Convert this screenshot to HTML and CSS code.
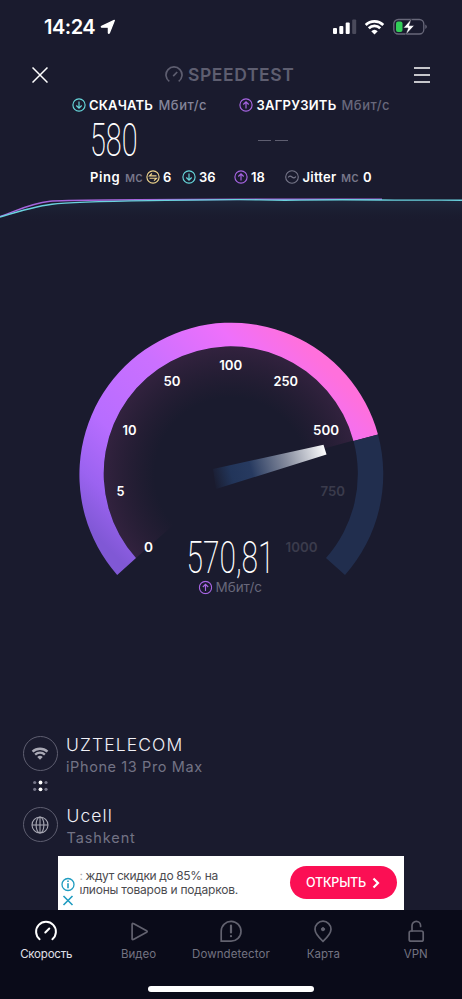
FILE: index.html
```html
<!DOCTYPE html>
<html lang="ru">
<head>
<meta charset="utf-8">
<title>Speedtest</title>
<link rel="stylesheet" href="styles.css">
</head>
<body>
<svg class="defs" width="0" height="0">
  <symbol id="down" viewBox="0 0 14 14"><g fill="none" stroke="currentColor" stroke-width="1.15"><circle cx="7" cy="7" r="6.1"/><path d="M7 3.5v6.6M4.3 7.5 7 10.2l2.7-2.7"/></g></symbol>
  <symbol id="up" viewBox="0 0 14 14"><g fill="none" stroke="currentColor" stroke-width="1.15"><circle cx="7" cy="7" r="6.1"/><path d="M7 10.5V3.9M4.3 6.5 7 3.8l2.7 2.7"/></g></symbol>
  <symbol id="swap" viewBox="0 0 14 14"><g fill="none" stroke="currentColor" stroke-width="1.15"><circle cx="7" cy="7" r="6.1"/><path d="M10.5 5.9h-7L6 3.5M3.5 8.2h7L8 10.6"/></g></symbol>
  <symbol id="wave" viewBox="0 0 14 14"><g fill="none" stroke="currentColor" stroke-width="1.1"><circle cx="7" cy="7" r="6.3"/><path d="M3.2 7.6C4.2 5.7 5.6 5.7 7 7s2.800 1.300 3.800-.6"/></g></symbol>
  <symbol id="wifi" viewBox="0 0 22 16"><path d="M1.800 5.800a13.400 13.400 0 0 1 18.400 0M5 9.300a8.700 8.700 0 0 1 12 0" fill="none" stroke="currentColor" stroke-width="2.900"/><path d="M11 15.800 7.600 12.400a5 5 0 0 1 6.800 0z" fill="currentColor"/></symbol>
</svg>
<main class="screen">
  <header class="status">
    <span class="time">14:24</span>
    <svg class="loc" width="16" height="16" viewBox="0 0 16 16"><path d="M14.300 1.400 9.300 14q-.5.800-.9 0V8.200H1.700q-.8-.4 0-.9z" fill="#fff" stroke="#fff" stroke-width="1.300" stroke-linejoin="round"/></svg>
    <svg width="24" height="16" viewBox="0 0 24 16" fill="#fff"><rect y="9" width="4" height="6" rx="1"/><rect x="6.300" y="7" width="4" height="8" rx="1"/><rect x="12.700" y="3.500" width="4" height="11.500" rx="1"/><rect x="19.200" y=".5" width="4" height="14.500" rx="1" fill="#4a4a5b"/></svg>
    <svg class="white" width="21" height="16"><use href="#wifi"/></svg>
    <svg width="35" height="18" viewBox="0 0 35 18"><rect x=".8" y="1.500" width="30" height="14.500" rx="4.500" fill="none" stroke="#68687a" stroke-width="1.300"/><path d="M32.300 6.500q3 2 0 4.500z" fill="#68687a"/><rect x="3" y="3.600" width="6.500" height="10.300" rx="2" fill="#32ce58"/><path d="M18.500.8 10.300 10h4.700l-2.400 7 8.700-9.400h-5z" fill="#fff" stroke="#1a1b2e" stroke-width=".6"/></svg>
  </header>

  <div class="titlebar">
    <svg width="16" height="16" viewBox="0 0 16 16"><path d="m.5.5 15 15m0-15-15 15" stroke="#fff" stroke-width="1.500"/></svg>
    <svg width="18" height="18" viewBox="0 0 18 18" fill="none" stroke="#5e5e70" stroke-width="1.700"><path d="M4.300 15.400a8 8 0 1 1 9.400 0M8.200 10.200l4-4.200"/></svg>
    <span class="brand">SPEEDTEST</span>
    <svg width="16" height="16" viewBox="0 0 16 16"><path d="M0 1h16M0 8h16M0 15h16" stroke="#fff" stroke-width="1.600"/></svg>
  </div>

  <section class="labels">
    <svg class="ic cyan"><use href="#down"/></svg><b class="l1">СКАЧАТЬ</b><span class="unit">Мбит/с</span>
    <svg class="ic violet"><use href="#up"/></svg><b class="l2">ЗАГРУЗИТЬ</b><span class="unit dim">Мбит/с</span>
  </section>
  <section class="results">
    <div class="narrow download">580</div>
    <div class="empty"><i></i><i></i></div>
  </section>
  <section class="latency">
    <b class="ping">Ping</b><span class="ms">мс</span>
    <svg class="ic yellow"><use href="#swap"/></svg><b>6</b>
    <svg class="ic cyan"><use href="#down"/></svg><b>36</b>
    <svg class="ic violet"><use href="#up"/></svg><b>18</b>
    <svg class="ic grey"><use href="#wave"/></svg><b class="jit">Jitter</b><span class="ms">мс</span><b>0</b>
  </section>

  <svg class="chart" width="462" height="50" viewBox="0 190 462 50">
    <defs><linearGradient id="fade" x2="0" y2="1"><stop stop-color="#2c5370" stop-opacity=".22"/><stop offset="1" stop-color="#1a1b2e" stop-opacity="0"/></linearGradient></defs>
    <path d="M0 217C22 209 42 204 66 202.500S170 200 240 200.500 330 199 462 200V222H0z" fill="url(#fade)"/>
    <path d="M0 216.500C16 211 30 203.500 50 201.300S180 199.300 382 199.200" fill="none" stroke="#a565dc" stroke-width="1.400"/>
    <path d="M0 217C18 211.500 34 206.500 52 204.200S112 201.200 150 200.600 220 199.500 240 199.600 270 200.600 300 200.100 340 199.500 380 200 430 199.800 462 200.200" fill="none" stroke="#6bd3df" stroke-width="1.400"/>
  </svg>

  <section class="gauge">
    <svg width="462" height="320" viewBox="0 300 462 320">
      <defs>
        <linearGradient id="arc" gradientUnits="userSpaceOnUse" x1="120" y1="560" x2="320" y2="360"><stop stop-color="#8058d5"/><stop offset=".13" stop-color="#9b63f0"/><stop offset=".3" stop-color="#b76dff"/><stop offset=".58" stop-color="#cb70ff"/><stop offset=".83" stop-color="#ee70fb"/><stop offset="1" stop-color="#ff70dc"/></linearGradient>
        <radialGradient id="glow" gradientUnits="userSpaceOnUse" cx="231" cy="474" r="127"><stop offset=".6" stop-color="#602850" stop-opacity="0"/><stop offset="1" stop-color="#703468" stop-opacity=".28"/></radialGradient>
        <linearGradient id="needle" gradientUnits="userSpaceOnUse" x1="212" y1="479" x2="326" y2="449"><stop stop-color="#22375b" stop-opacity="0"/><stop offset=".17" stop-color="#22355a"/><stop offset=".34" stop-color="#273a60"/><stop offset=".65" stop-color="#858b9d"/><stop offset="1" stop-color="#fff"/></linearGradient>
      </defs>
      <path d="M231 474 136 558A127 127 0 1 1 353.500 440.600z" fill="url(#glow)"/>
      <path d="M117.200 575A152 152 0 1 1 378 434.500L353.500 441A127 127 0 1 0 136 558z" fill="url(#arc)"/>
      <path d="M378 434.500A152 152 0 0 1 345 575L326 558A127 127 0 0 0 353.500 441z" fill="#212e4e"/>
      <path d="M213 469 323.500 444.800 326.500 454.600 216 489z" fill="url(#needle)"/>
      <g class="ticks">
        <text x="144" y="552.300" textLength="9" lengthAdjust="spacingAndGlyphs">0</text>
        <text x="116.500" y="495.800" textLength="8" lengthAdjust="spacingAndGlyphs">5</text>
        <text x="122.500" y="434.900" textLength="14" lengthAdjust="spacingAndGlyphs">10</text>
        <text x="163.500" y="386.100" textLength="17" lengthAdjust="spacingAndGlyphs">50</text>
        <text x="219.200" y="369.700" textLength="23" lengthAdjust="spacingAndGlyphs">100</text>
        <text x="273.500" y="386.100" textLength="24.500" lengthAdjust="spacingAndGlyphs">250</text>
        <text x="313" y="434.900" textLength="26" lengthAdjust="spacingAndGlyphs">500</text>
        <text x="320.500" y="495.800" textLength="24.500" lengthAdjust="spacingAndGlyphs" class="off">750</text>
        <text x="285.500" y="552.300" textLength="32" lengthAdjust="spacingAndGlyphs" class="off">1000</text>
      </g>
      <text class="speed" transform="translate(186.500 572.500) scale(.62 1)" textLength="142" lengthAdjust="spacingAndGlyphs">570,81</text>
      <svg class="violet" x="198.500" y="580.500" width="14" height="14"><use href="#up"/></svg>
      <text class="speedunit" x="215.500" y="592" textLength="46.500" lengthAdjust="spacingAndGlyphs">Мбит/с</text>
    </svg>
  </section>

  <section class="hosts">
    <div class="host">
      <div class="ring"><svg width="18" height="13"><use href="#wifi"/></svg></div>
      <div><h2 class="h-uz">UZTELECOM</h2><p class="p-ip">iPhone 13 Pro Max</p></div>
    </div>
    <svg class="dots" width="16" height="12" viewBox="0 0 16 12" fill="#77778a"><circle cx="1.700" cy="2.500" r="1.600"/><circle cx="7.500" cy="2.500" r="1.900" fill="#fff"/><circle cx="13" cy="2.500" r="1.600"/><circle cx="1.700" cy="9.300" r="1.600"/><circle cx="7.500" cy="9.300" r="1.900" fill="#fff"/><circle cx="13" cy="9.300" r="1.600"/></svg>
    <div class="host second">
      <div class="ring"><svg width="18" height="18" viewBox="0 0 18 18" fill="none" stroke="currentColor" stroke-width="1.100"><circle cx="9" cy="9" r="8"/><ellipse cx="9" cy="9" rx="3.900" ry="8"/><path d="M9 1v16M1 9h16"/></svg></div>
      <div><h2 class="h-uc">Ucell</h2><p class="p-ta">Tashkent</p></div>
    </div>
  </section>

  <aside class="ad">
    <svg class="adctl" width="14" height="32" viewBox="0 0 14 32" fill="none" stroke="#1f9cc0" stroke-width="1.300"><circle cx="7" cy="7.500" r="6"/><path d="M7 6.300v5M7 3.500v1.600" stroke-width="1.600"/><path d="m2.500 19 9 9m0-9-9 9" stroke-width="1.600"/></svg>
    <div class="adcopy"><p class="a1"><span class="cut">:</span> ждут скидки до 85% на</p><p class="a2">ıлионы товаров и подарков.</p></div>
    <div class="cta"><span>ОТКРЫТЬ</span><svg width="8" height="12" viewBox="0 0 8 12"><path d="m1.500 1.500 4.500 4.500-4.500 4.500" fill="none" stroke="#fff" stroke-width="2.200"/></svg></div>
  </aside>

  <nav class="tabs">
    <div class="tab on"><svg width="24" height="24" viewBox="0 0 24 24"><path d="M5.600 20.200a9.900 9.900 0 1 1 12.800 0M11.300 13.500l4-4" stroke-width="2"/></svg><span class="t1">Скорость</span></div>
    <div class="tab"><svg width="24" height="24" viewBox="0 0 24 24"><path d="M5.100 5.300v14.400q0 1.500 1.300.7L19.600 13.200q1.200-.7 0-1.400L6.400 4.600q-1.300-.8-1.300.7z"/></svg><span class="t2">Видео</span></div>
    <div class="tab"><svg width="24" height="24" viewBox="0 0 24 24"><path d="M2.200 22.200V12A9.900 9.900 0 1 1 12 22.200z"/><path d="M12 6.500v7M12 17v.2" stroke-width="2.200"/></svg><span class="t3">Downdetector</span></div>
    <div class="tab"><svg width="24" height="24" viewBox="0 0 24 24"><path d="M12 22.300C8 18.600 4 14.500 4 10.200a8 8 0 0 1 16 0c0 4.300-4 8.400-8 12.100z"/><circle cx="12" cy="10.200" r="1.600" fill="currentColor" stroke-width="1"/></svg><span class="t4">Карта</span></div>
    <div class="tab"><svg width="24" height="24" viewBox="0 0 24 24"><rect x="5.200" y="12" width="14" height="10.200" rx="1.800"/><path d="M8 12V6.700a4.300 4.300 0 0 1 8.600 0v.8"/></svg><span class="t5">VPN</span></div>
  </nav>
  <footer class="home"><i></i></footer>
</main>
</body>
</html>
```
FILE: styles.css
```css
* { box-sizing: border-box; }
body { margin: 0; background: #1a1b2e; }
h2, p { margin: 0; font-weight: 400; }
svg { display: block; flex: none; }
.defs { position: absolute; }
.screen { width: 462px; height: 999px; overflow: hidden; display: flex; flex-direction: column; font-family: Inter, "Noto Sans", sans-serif; color: #fff; white-space: nowrap; }
.screen > * { flex: none; }

.status { height: 54px; display: grid; grid-template-columns: 56px 233px 31px 29px 35px; align-items: center; padding-left: 44px; }
.time { font-size: 20px; font-weight: 600; letter-spacing: -.5px; }
.white { color: #fff; }

.titlebar { height: 41px; display: grid; grid-template-columns: 133px 23px 226px 16px; align-items: center; padding-left: 32px; }
.brand { font-size: 17.500px; font-weight: 600; color: #5e5e70; letter-spacing: .6px; }

.ic { width: 14px; height: 14px; }
.cyan { color: #67d8dc; }
.violet { color: #a765e3; }
.yellow { color: #eed48c; }
.grey { color: #77778a; }

.labels { height: 19px; display: grid; grid-template-columns: 17.500px 69.500px 80px 18px 85px 60px; align-items: center; padding-left: 71.500px; font-size: 13px; }
b { font-weight: 600; }
.l1 { letter-spacing: .15px; }
.l2 { letter-spacing: .25px; }
.unit { color: #85859a; font-weight: 500; letter-spacing: .5px; }
.dim { color: #68687b; }

.results { height: 50px; display: grid; grid-template-columns: 168px 40px; padding-left: 90px; align-items: center; }
.narrow { font: 200 46.500px/50px Roboto, sans-serif; transform: translateY(1px) scaleX(.62); transform-origin: 0 50%; width: 80px; }
.empty { display: flex; gap: 4px; padding-top: 3px; }
.empty i { width: 13px; height: 1.500px; background: #5e5e70; }

.latency { height: 26px; display: grid; grid-template-columns: 35px 20.500px 17.500px 18.500px 17.500px 34.500px 17.500px 34px 17.500px 38.500px 22px 10px; align-items: center; padding: 0 0 0 90px; font-size: 13px; }
.ping { letter-spacing: .6px; }
.jit { letter-spacing: .25px; }
.ms { color: #77778a; font-weight: 500; }

.chart { height: 50px; }
.gauge { height: 320px; margin-top: 60px; }
.ticks { font-size: 13px; font-weight: 600; fill: #fff; }
.off { fill: #3b3b4c; }
.speed { font: 200 45px Roboto, sans-serif; fill: #fff; }
.speedunit { font-size: 13px; fill: #68687b; }

.hosts { height: 235.500px; padding: 115px 0 0 22.500px; }
.host { display: grid; grid-template-columns: 43.500px 200px; height: 43px; }
.ring { width: 35px; height: 35px; margin-top: 1px; border: 1.500px solid #5e5e70; border-radius: 50%; display: flex; align-items: center; justify-content: center; color: #a9a9b5; }
.host h2 { font-size: 17.500px; line-height: 20px; color: #f0f0f6; font-weight: 300; }
.host p { font-size: 14.500px; line-height: 20px; margin-top: 2px; color: #737385; }
.h-uz { letter-spacing: 1.1px; }
.h-uc { letter-spacing: 1.1px; }
.p-ip { letter-spacing: .6px; }
.p-ta { letter-spacing: .9px; }
.dots { margin: 2px 0 0 10px; }
.second { margin-top: 14px; }
.second h2, .second p { padding-left: .5px; }

.ad { height: 54px; width: 346px; margin-left: 58px; background: #fff; display: grid; grid-template-columns: 19px 210px 107px; align-items: center; padding-left: 2.500px; }
.adctl { margin-top: 20px; }
.adcopy { font-size: 12px; line-height: 13.500px; color: #4b4b4f; }
.a1 { letter-spacing: -.37px; }
.a2 { letter-spacing: -.22px; }
.cut { color: #aaa; }
.cta { height: 33px; border-radius: 17px; background: #fb0f54; display: flex; align-items: center; justify-content: center; gap: 6px; font-size: 12.500px; font-weight: 500; letter-spacing: -.2px; }

.tabs { height: 65px; background: #0a0b19; display: grid; grid-template-columns: repeat(5, 92.400px); color: #62626f; }
.tab { display: flex; flex-direction: column; align-items: center; padding-top: 9.500px; font-size: 11.500px; line-height: 16px; gap: 3px; }
.tab svg { fill: none; stroke: currentColor; stroke-width: 1.700; stroke-linecap: round; }
.tab span { color: #737381; }
.tab.on { color: #fff; }
.tab.on span { color: #e0e0e8; letter-spacing: -.2px; }
.t3 { letter-spacing: .1px; }
.home { flex: 1 0 auto !important; background: #0a0b19; display: flex; justify-content: center; padding-top: 11px; }
.home i { width: 166px; height: 6px; border-radius: 3px; background: #fff; }
```
